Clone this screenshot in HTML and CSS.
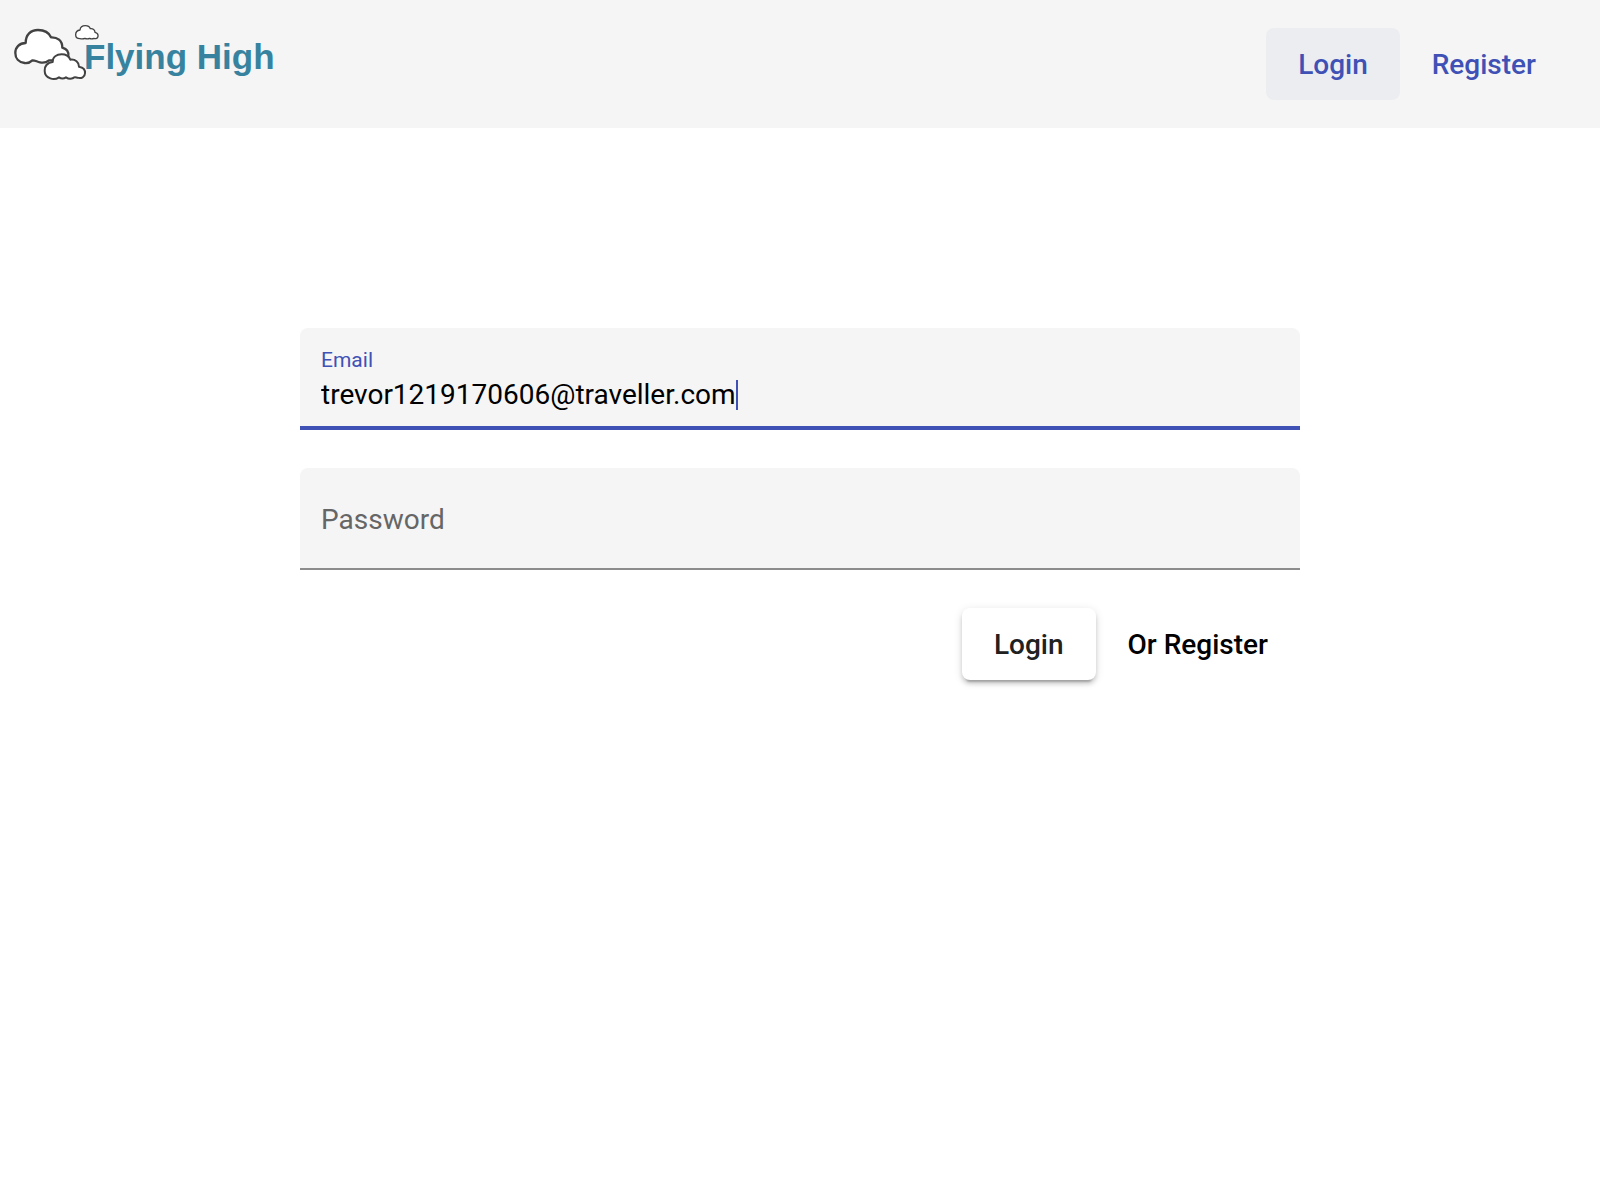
FILE: index.html
```html
<!DOCTYPE html>
<html lang="en">
<head>
  <meta charset="utf-8">
  <meta name="viewport" content="width=device-width, initial-scale=1">
  <title>Flying High</title>
  <link rel="stylesheet" href="styles.css">
</head>
<body>
  <header class="toolbar">
    <a class="brand" href="#" aria-label="Flying High">
      <svg class="logo" viewBox="0 0 288 96">
        <g class="clouds" transform="translate(0 10) scale(.3333)">
          <path stroke-width="7" d="M77 99C77 74 92 60 114 60C132 60 147 68 153 82C172 81 187 91 187 113C201 117 207 128 205 140C204 149 193 155 180 151L147 151C140 157 130 159 120 157C111 155 103 150 97 151C91 157 83 160 74 159C56 157 46 145 46 129C46 112 58 99 77 99Z"/>
          <path stroke-width="6" d="M158 156C158 141 170 133 185 133C197 133 207 139 211 149C226 147 237 157 237 170C249 172 256 180 255 190C255 201 244 207 232 203C227 202 223 200 220 204C211 208 204 206 198 202C191 207 184 207 177 202C168 208 158 208 151 205C140 201 134 193 134 182C134 168 143 158 158 156Z"/>
          <path stroke-width="4" d="M240 60C241 51 248 47 256 47C263 47 269 50 271 56C279 55 285 60 285 67C292 69 295 74 294 79C293 86 287 87 282 85C277 87 273 87 269 85C264 87 259 87 255 85C250 87 245 87 240 86C232 86 227 81 227 74C227 66 232 61 240 60Z"/>
        </g>
        <text class="logo-name" x="84" y="69">Flying High</text>
      </svg>
    </a>
    <nav class="nav">
      <a class="btn btn-primary btn-active" href="#login">Login</a>
      <a class="btn btn-primary" href="#register">Register</a>
    </nav>
  </header>
  <main class="page">
    <form class="form">
      <div class="field field-focused">
        <label class="field-label" for="email">Email</label>
        <div class="field-row">
          <input class="field-input" id="email" type="text" inputmode="email" value="trevor1219170606@traveller.com">
          <span class="caret"></span>
        </div>
      </div>
      <div class="field field-empty">
        <label class="field-prompt" for="password">Password</label>
        <input class="field-input field-fill" id="password" type="password">
      </div>
      <div class="actions">
        <button class="btn btn-raised" type="button">Login</button>
        <button class="btn" type="button">Or Register</button>
      </div>
    </form>
  </main>
</body>
</html>
```
FILE: styles.css
```css
* {
  box-sizing: border-box;
}

body {
  margin: 0;
  background: #fff;
  color: #000;
  font-family: Roboto, "Liberation Sans", sans-serif;
  font-size: 28px;
}

.toolbar {
  display: flex;
  align-items: center;
  justify-content: space-between;
  min-height: 128px;
  padding: 0 32px 0 0;
  background: #f5f5f5;
}

.brand {
  align-self: flex-start;
}

.logo {
  display: block;
  width: 288px;
  height: 96px;
}

.clouds {
  fill: #fff;
  stroke: #424242;
  stroke-linejoin: round;
}

.logo-name {
  fill: #37839f;
  font-family: "Liberation Sans", Arial, sans-serif;
  font-size: 35px;
  font-weight: 700;
}

.nav {
  display: flex;
}

.btn {
  padding: 2px 32px 0;
  border: 0;
  border-radius: 8px;
  background: transparent;
  color: #000;
  font-family: inherit;
  font-size: 28px;
  font-weight: 500;
  line-height: 70px;
  text-decoration: none;
  white-space: nowrap;
}

.btn-primary {
  color: #3f51b5;
}

.btn-active {
  background: #ecedf1;
}

.btn-raised {
  background: #fff;
  color: #212121;
  box-shadow: 0 6px 2px -4px rgba(0, 0, 0, .2), 0 4px 4px rgba(0, 0, 0, .14), 0 2px 10px rgba(0, 0, 0, .12);
}

.page {
  padding: 200px 32px 32px;
}

.form {
  max-width: 1000px;
  margin: 0 auto;
}

.field {
  min-height: 102px;
  margin-bottom: 38px;
  padding: 0 21px;
  border-bottom: 2px solid #8c8c8c;
  border-radius: 8px 8px 0 0;
  background: #f5f5f5;
}

.field-focused {
  padding-top: 20px;
  border-bottom: 4px solid #3f51b5;
}

.field-empty {
  display: flex;
  align-items: center;
  gap: 16px;
  padding-top: 4px;
}

.field-label {
  display: block;
  color: #3f51b5;
  font-size: 21px;
  line-height: 24px;
}

.field-prompt {
  color: #666;
  line-height: 32px;
}

.field-row {
  display: flex;
  align-items: center;
  height: 46px;
}

.field-input {
  min-width: 0;
  padding: 0;
  border: 0;
  outline: 0;
  background: transparent;
  color: #000;
  font-family: inherit;
  font-size: 28px;
  line-height: 32px;
  field-sizing: content;
}

.field-fill {
  flex: 1;
}

.caret {
  width: 2px;
  height: 30px;
  background: #3f51b5;
}

.actions {
  display: flex;
  justify-content: flex-end;
}
```
